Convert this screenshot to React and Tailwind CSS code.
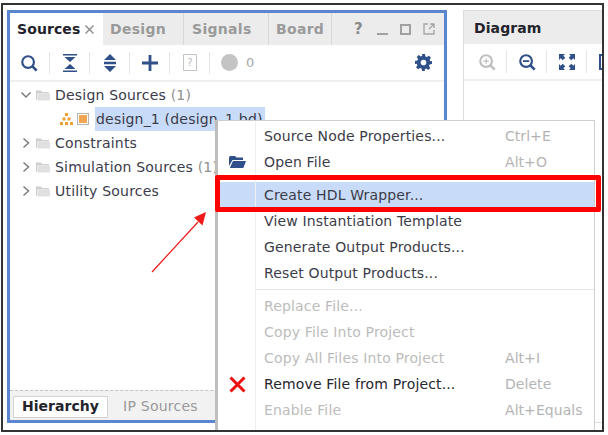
const FONT = { fontFamily: '"DejaVu Sans", sans-serif' };
const NAVY = "#2f5088";

function Sep() {
  return <span className="w-px h-[22px] bg-[#e4e4e4] shrink-0" />;
}

function Slot({ children, className = "w-[39px]" }) {
  return <span className={`${className} h-[22px] flex items-center justify-center shrink-0`}>{children}</span>;
}

function Magnifier({ kind, color = NAVY }) {
  return (
    <svg width="18" height="18" viewBox="0 0 20 20" fill="none" stroke={color} strokeWidth="2.4">
      <circle cx="9" cy="9" r="6.5" />
      <path d="M13.5 13.5 L18.5 18.5" strokeWidth="3" />
      {kind === "plus" && <path d="M6 9h6M9 6v6" strokeWidth="1.4" />}
      {kind === "minus" && <path d="M5.5 9h7" strokeWidth="2" />}
    </svg>
  );
}

function Folder() {
  return (
    <svg width="14" height="12" viewBox="0 0 14 12" className="shrink-0">
      <path d="M0 1.5h5l1.2 1.5H13v1.4H1.4V11H0z" fill="#cfcfcf" />
      <path d="M2 5h12v6.5H2z" fill="#e0e0e0" />
    </svg>
  );
}

function Chevron({ open }) {
  return (
    <svg width="10" height="12" viewBox="0 0 10 12" fill="none" stroke="#777" strokeWidth="1.4" className="shrink-0">
      {open ? <path d="M0.5 3.5 L5 8 L9.5 3.5" /> : <path d="M2.5 1.5 L7.5 6 L2.5 10.5" />}
    </svg>
  );
}

function TreeRow({ label, count, open }) {
  return (
    <div className="h-6 flex items-center pl-[11px]">
      <Chevron open={open} />
      <span className="w-[4px]" />
      <span className="ml-[1px]"><Folder /></span>
      <span className="ml-[5px] text-[14px] tracking-[0.2px] text-[#3b3b4a] whitespace-nowrap">
        {label}
        {count && <span className="text-[#8f8f8f]"> {count}</span>}
      </span>
    </div>
  );
}

function Item({ label, shortcut, disabled, icon, strong }) {
  const color = disabled ? "text-[#bcbcbc]" : strong ? "text-[#26262e]" : "text-[#3c3c48]";
  return (
    <div className="h-[26px] flex items-center">
      <span className="w-[38px] flex justify-center shrink-0">{icon}</span>
      <span className={`ml-[8px] w-[241px] whitespace-nowrap text-[14px] tracking-[0.15px] ${color}`}>{label}</span>
      {shortcut && <span className="text-[14px] tracking-[0.05px] text-[#b4b4b4] whitespace-nowrap">{shortcut}</span>}
    </div>
  );
}

const OpenIcon = (
  <svg width="17" height="14" viewBox="0 0 17 14" fill={NAVY}>
    <path d="M0 2.5 Q0 1 1.5 1H6l1.5 1.6H14V5H3.5L0 11z" />
    <path d="M4 6h13l-2.6 7H0.8z" />
  </svg>
);
const XIcon = (
  <svg width="17" height="17" viewBox="0 0 17 17" fill="none" stroke="#ee1111" strokeWidth="3">
    <path d="M1.5 1.5 L15.5 15.5 M15.5 1.5 L1.5 15.5" />
  </svg>
);

export default function App() {
  return (
    <div className="w-[608px] h-[435px] bg-white overflow-hidden pt-[3px] pl-[1px]" style={FONT}>
      <div className="relative w-[603px] h-[429px] border-2 border-[#333333] bg-white flex pt-[5px] pl-[4px] gap-[16px] overflow-hidden">
        {/* Sources panel */}
        <div className="w-[440px] h-[413px] border-[3px] border-[#5a86cf] flex flex-col shrink-0 overflow-hidden">
          <div className="h-[32px] bg-[#ececec] flex items-stretch shrink-0">
            <div className="w-[93px] bg-white flex items-center pl-[7px] gap-[5px]">
              <span className="text-[14px] font-bold tracking-[0.1px] text-[#23232c]">Sources</span>
              <svg width="9" height="9" viewBox="0 0 9 9" stroke="#8a8a8a" strokeWidth="1.4">
                <path d="M0.5 0.5 L8.5 8.5 M8.5 0.5 L0.5 8.5" />
              </svg>
            </div>
            <div className="flex items-center w-[81px] pl-[7px] text-[14px] font-bold tracking-[0.3px] text-[#9a9a9a] border-r border-[#d8d8d8]">Design</div>
            <div className="flex items-center w-[85px] pl-[8px] text-[14px] font-bold tracking-[0.3px] text-[#9a9a9a] border-r border-[#d8d8d8]">Signals</div>
            <div className="flex items-center w-[63px] pl-[7px] text-[14px] font-bold tracking-[0.3px] text-[#9a9a9a] border-r border-[#d8d8d8]">Board</div>
            <div className="flex items-center flex-1 pl-[22px] gap-[11px]">
              <span className="text-[15px] font-bold text-[#8a8a8a] w-[12px]">?</span>
              <span className="w-[11px] h-[2px] bg-[#a0a0a0] mt-[9px]" />
              <span className="w-[11px] h-[11px] border-2 border-[#a0a0a0] ml-[1px]" />
              <svg width="12" height="12" viewBox="0 0 12 12" fill="none" stroke="#a6a6a6" strokeWidth="1.4" className="ml-[1px]">
                <path d="M5 1H1v10h10V7M7 1h4v4M11 1 L6 6" />
              </svg>
            </div>
          </div>
          <div className="h-[37px] bg-white border-b-2 border-[#efefef] flex items-center shrink-0">
            <Slot className="w-[39px] pr-[2px]"><Magnifier /></Slot>
            <Sep />
            <Slot>
              <svg width="16" height="18" viewBox="0 0 16 18" fill={NAVY}>
                <path d="M1 0h14v1.6H1zM1 16.4h14V18H1zM2.5 3h11L8 8zM8 10l5.5 5h-11z" />
              </svg>
            </Slot>
            <Sep />
            <Slot>
              <svg width="14" height="18" viewBox="0 0 14 18" fill={NAVY}>
                <path d="M7 0l6 6H1zM7 18l-6-6h12zM1 7.8h12v2.4H1z" />
              </svg>
            </Slot>
            <Sep />
            <Slot>
              <svg width="16" height="16" viewBox="0 0 16 16" fill={NAVY}>
                <path d="M6.6 0h2.8v6.6H16v2.8H9.4V16H6.6V9.4H0V6.6h6.6z" />
              </svg>
            </Slot>
            <Sep />
            <Slot>
              <svg width="14" height="17" viewBox="0 0 14 17" fill="none" stroke="#c4c4c4">
                <path d="M0.5 0.5h13v16H0.5z" />
                <text x="7" y="12" fontSize="10" fill="#bbbbbb" stroke="none" textAnchor="middle" fontFamily="DejaVu Sans">?</text>
              </svg>
            </Slot>
            <Sep />
            <span className="ml-[11px] w-[17px] h-[17px] rounded-full bg-[#c4c4c4]" />
            <span className="ml-[8px] text-[13px] text-[#a8a8a8]">0</span>
            <svg width="17" height="17" viewBox="0 0 24 24" fill={NAVY} className="ml-auto mr-[12px]">
              <path fillRule="evenodd" d="M10 0h4l.7 3.4 2.1.9 2.9-1.9 2.8 2.8-1.9 2.9.9 2.1L24 10v4l-3.4.7-.9 2.1 1.9 2.9-2.8 2.8-2.9-1.9-2.1.9L14 24h-4l-.7-3.4-2.1-.9-2.9 1.9-2.8-2.8 1.9-2.9-.9-2.1L0 14v-4l3.4-.7.9-2.1-1.9-2.9 2.8-2.8 2.9 1.9 2.1-.9zM12 8a4 4 0 100 8 4 4 0 000-8z" />
            </svg>
          </div>
          <div className="flex-1 flex flex-col pt-[1px]">
            <TreeRow label="Design Sources" count="(1)" open />
            <div className="h-6 flex items-center pl-[50px]">
              <svg width="13" height="12" viewBox="0 0 13 12" fill="#f0a030" className="shrink-0">
                <path d="M5 0h3v3H5zM2.5 4.5h3v3h-3zM7.5 4.5h3v3h-3zM0 9h3v3H0zM5 9h3v3H5zM10 9h3v3h-3z" />
              </svg>
              <span className="ml-[4px] w-[12px] h-[12px] border border-[#b5b5b5] flex items-center justify-center shrink-0">
                <span className="w-2 h-2 bg-[#f2a650]" />
              </span>
              <span className="ml-[6px] h-6 w-[170px] bg-[#c8dbf8] flex items-center pl-[1px] text-[14px] tracking-[0.2px] text-[#3b3b4a] whitespace-nowrap">design_1 (design_1.bd)</span>
            </div>
            <TreeRow label="Constraints" />
            <TreeRow label="Simulation Sources" count="(1)" />
            <TreeRow label="Utility Sources" />
            <div className="mt-auto border-t border-dashed border-[#c4c4c4] bg-[#f2f2f2] h-[30px] flex items-center pl-[3px] pt-[2px]">
              <div className="w-[95px] h-[22px] bg-white border border-[#d4d4d4] flex items-center justify-center text-[14px] font-bold tracking-[0.05px] text-[#23232c]">Hierarchy</div>
              <div className="ml-[15px] text-[14px] tracking-[0.25px] text-[#9a9a9a] whitespace-nowrap">IP Sources</div>
            </div>
          </div>
        </div>
        {/* Diagram panel */}
        <div className="w-[160px] h-[413px] border border-[#dcdcdc] flex flex-col overflow-hidden shrink-0">
          <div className="h-[33px] bg-[#ececec] flex items-center pl-[10px] pt-[1px] text-[14px] font-bold tracking-[0.1px] text-[#23232c] shrink-0">Diagram</div>
          <div className="h-[37px] border-b-2 border-[#efefef] flex items-center pl-[3px] shrink-0">
            <Slot><Magnifier kind="plus" color="#c0c0c0" /></Slot>
            <Sep />
            <Slot><Magnifier kind="minus" /></Slot>
            <Sep />
            <Slot>
              <svg width="16" height="16" viewBox="0 0 16 16" fill={NAVY}>
                <path d="M0 0h6L4.3 1.7l2 2-2.6 2.6-2-2L0 6zM16 0v6l-1.7-1.7-2 2-2.6-2.6 2-2L10 0zM0 16v-6l1.7 1.7 2-2 2.6 2.6-2 2L6 16zM16 16h-6l1.7-1.7-2-2 2.6-2.6 2 2L16 10z" />
              </svg>
            </Slot>
            <Sep />
            <span className="ml-[12px] w-[10px] h-4 border-l-2 border-y-2 border-[#2f5088] shrink-0" />
          </div>
        </div>

        {/* Context menu */}
        <div className="absolute left-[212px] top-[115px] w-[380px] h-[312px] bg-white border border-[#cfcfcf] border-l-[3px] border-l-[#bdbdbd] pt-[2px] overflow-hidden">
          <span className="absolute left-[37px] top-0 bottom-0 w-px bg-[#eeeeee]" />
          <Item label="Source Node Properties..." shortcut="Ctrl+E" />
          <Item label="Open File" shortcut="Alt+O" icon={OpenIcon} />
          <div className="h-[7px]" />
          <div className="bg-[#c8dbf8]"><Item label="Create HDL Wrapper..." /></div>
          <Item label="View Instantiation Template" />
          <Item label="Generate Output Products..." />
          <Item label="Reset Output Products..." />
          <div className="h-[7px] flex items-center pl-[38px]"><span className="h-px w-full bg-[#e8e8e8]" /></div>
          <Item label="Replace File..." disabled />
          <Item label="Copy File Into Project" disabled />
          <Item label="Copy All Files Into Project" shortcut="Alt+I" disabled />
          <Item label="Remove File from Project..." shortcut="Delete" icon={XIcon} strong />
          <Item label="Enable File" shortcut="Alt+Equals" disabled />
        </div>

        {/* Annotations */}
        <div className="absolute left-[212px] top-[170px] w-[386px] h-[37px] border-[5px] border-[#ff0000] rounded-[2px]" />
        <svg width="70" height="70" viewBox="0 0 70 70" className="absolute left-[145px] top-[205px]" fill="none">
          <path d="M4 62 L50 12" stroke="#f01818" strokeWidth="1.2" />
          <path d="M58 2 L46 7.5 L54.5 15.5 Z" fill="#f01818" />
        </svg>
      </div>
    </div>
  );
}
